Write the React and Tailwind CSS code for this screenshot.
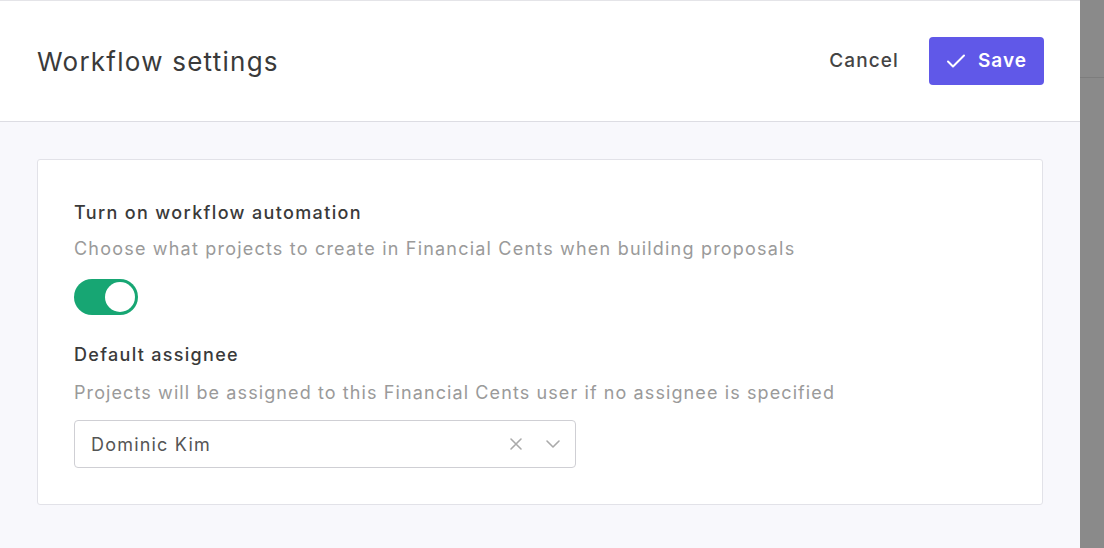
import React from "react";

export default function App() {
  return (
    <div className="flex h-[548px] w-[1104px] overflow-hidden bg-[#8a8a8a]" style={{ fontFamily: "Inter, 'Noto Sans', sans-serif" }}>
      <div className="flex w-[1080px] shrink-0 flex-col bg-[#f8f8fc] border-t border-[#e4e4e8]">
        <div className="flex h-[121px] shrink-0 items-center justify-between border-b border-[#dddde3] bg-white pl-[37px] pr-[36px]">
          <h1 className="text-[26px] font-normal text-[#3a3a3a] tracking-[1.25px]">Workflow settings</h1>
          <div className="flex items-center gap-[30px]">
            <button className="text-[19px] font-medium tracking-[1.1px] text-[#444]">Cancel</button>
            <button className="flex h-[48px] w-[115px] items-center justify-center gap-[12px] rounded-[4px] bg-[#6058e8] text-[19px] font-semibold tracking-[1px] text-white">
              <svg width="20" height="16" viewBox="0 0 20 16" fill="none" stroke="white" strokeWidth="2" strokeLinecap="round" strokeLinejoin="round">
                <path d="M2 8.5 L7 13.5 L18 2.5" />
              </svg>
              Save
            </button>
          </div>
        </div>
        <div className="px-[37px] pt-[37px]">
          <div className="h-[346px] rounded-[3px] border border-[#e2e2e8] bg-white pl-[36px] pt-[39px]">
            <div className="text-[18px] font-medium tracking-[1.35px] text-[#3a3a3a]">Turn on workflow automation</div>
            <div className="mt-[9px] text-[18px] tracking-[1.2px] text-[#9a9a9a]">Choose what projects to create in Financial Cents when building proposals</div>
            <div className="mt-[17px] flex h-[36px] w-[64px] items-center justify-end rounded-full bg-[#17a673] pr-[3px]">
              <div className="h-[30px] w-[30px] rounded-full bg-white"></div>
            </div>
            <div className="mt-[26px] text-[18px] font-medium tracking-[1.3px] text-[#3a3a3a]">Default assignee</div>
            <div className="mt-[11px] text-[18px] tracking-[1.1px] text-[#9a9a9a]">Projects will be assigned to this Financial Cents user if no assignee is specified</div>
            <div className="mt-[14px] flex h-[48px] w-[502px] items-center rounded-[4px] border border-[#cfcfd4] pl-[16px] pr-[14px]">
              <span className="flex-1 text-[18px] tracking-[1.2px] text-[#555]">Dominic Kim</span>
              <svg width="14" height="14" viewBox="0 0 14 14" fill="none" stroke="#aaa" strokeWidth="1.6" strokeLinecap="round">
                <path d="M2 2 L12 12 M12 2 L2 12" />
              </svg>
              <svg className="ml-[22px]" width="16" height="10" viewBox="0 0 16 10" fill="none" stroke="#aaa" strokeWidth="1.6" strokeLinecap="round" strokeLinejoin="round">
                <path d="M2 2 L8 8 L14 2" />
              </svg>
            </div>
          </div>
        </div>
      </div>
      <div className="flex-1">
        <div className="h-[78px] border-b border-[#7d7d7d]"></div>
      </div>
    </div>
  );
}
